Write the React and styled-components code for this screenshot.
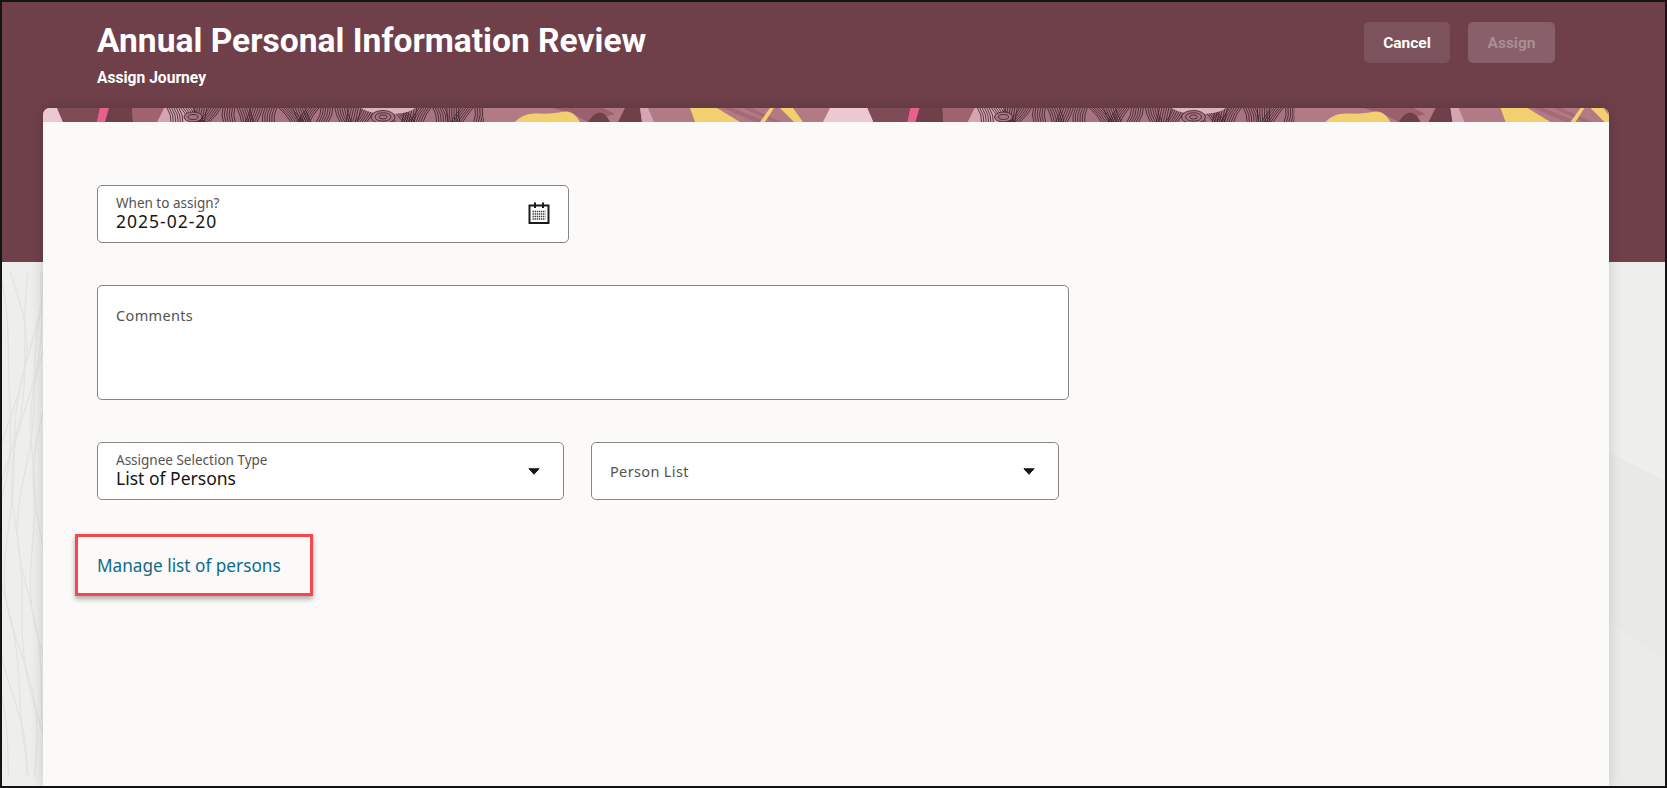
import React from "react";
import styled, { createGlobalStyle } from "styled-components";

const GlobalStyle = createGlobalStyle`
  html, body, #root {
    margin: 0;
    height: 100%;
  }
  body {
    font-family: "Noto Sans", "Open Sans", Arial, sans-serif;
    background: #111;
  }
`;

const Page = styled.div`
  position: relative;
  box-sizing: border-box;
  height: 788px;
  border: 2px solid #141414;
  overflow: hidden;
  background: #eeeeec;
  display: flex;
  flex-direction: column;
`;

const Backdrop = styled.svg`
  position: absolute;
  left: 0;
  top: 260px;
  width: 1663px;
  height: 524px;
`;

const Header = styled.header`
  position: relative;
  box-sizing: border-box;
  height: 260px;
  flex: none;
  background: #6f404a;
  padding: 20px 110px 0 95px;
  display: flex;
  justify-content: space-between;
  align-items: flex-start;
`;

const HeaderText = styled.div`
  margin-top: -1px;
`;

const Title = styled.h1`
  margin: 0;
  color: #fff;
  font-family: Roboto, "Noto Sans", sans-serif;
  font-size: 33.6px;
  line-height: 40px;
  font-weight: 700;
`;

const SubTitle = styled.div`
  margin-top: 7px;
  color: #fff;
  font-family: Roboto, "Noto Sans", sans-serif;
  font-size: 15.6px;
  line-height: 20px;
  font-weight: 700;
`;

const Actions = styled.div`
  display: flex;
  gap: 18px;
`;

const ActionButton = styled.button`
  width: ${(p) => p.$width}px;
  height: 41px;
  border: 0;
  border-radius: 5px;
  padding: 0;
  font: 700 15.5px Roboto, "Noto Sans", sans-serif;
  background: ${(p) => (p.disabled ? "#87606a" : "#7c535c")};
  color: ${(p) => (p.disabled ? "#ab8d94" : "#fff")};
`;

const Card = styled.main`
  position: relative;
  flex: 1;
  margin: -154px 56px 0 41px;
  background: #fbfaf8;
  border-radius: 7px 7px 0 0;
  box-shadow: 0 0 14px rgba(0, 0, 0, 0.16);
  overflow: hidden;
`;

const Banner = styled.svg`
  display: block;
  width: 100%;
  height: 14px;
`;

const CardBody = styled.div`
  padding: 63px 54px 0;
  display: flex;
  flex-direction: column;
  align-items: flex-start;
`;

const Field = styled.div`
  box-sizing: border-box;
  width: ${(p) => p.$width}px;
  height: ${(p) => p.$height || 58}px;
  background: #fff;
  border: 1px solid #858583;
  border-radius: 5px;
  padding: 0 18px;
  display: flex;
  align-items: center;
  justify-content: space-between;
  margin-top: ${(p) => p.$top || 0}px;
  color: #161513;
`;

const TextArea = styled(Field)`
  align-items: flex-start;
  padding-top: 19px;
`;

const Stacked = styled.div`
  display: flex;
  flex-direction: column;
  margin-top: -2px;
`;

const Label = styled.span`
  font-size: 13.5px;
  line-height: 16px;
  color: #55524f;
`;

const Placeholder = styled.span`
  font-size: 14.5px;
  line-height: 20px;
  color: #55524f;
  letter-spacing: 0.35px;
`;

const Value = styled.span`
  font-size: 17.5px;
  line-height: 20px;
  color: #161513;
  letter-spacing: ${(p) => (p.$digits ? "1px" : "0")};
`;

const SelectRow = styled.div`
  display: flex;
  gap: 27px;
  margin-top: 42px;
`;

const Caret = styled.svg`
  width: 12px;
  height: 7px;
  margin: 0 5px 0 0;
  flex: none;
`;

const CalendarIcon = styled.svg`
  width: 22px;
  height: 22px;
  margin-bottom: 2px;
  flex: none;
`;

const Callout = styled.div`
  box-sizing: border-box;
  width: 238px;
  height: 62px;
  margin: 34px 0 0 -22px;
  padding: 1px 0 0 19px;
  border: 3px solid #f5474e;
  box-shadow: 0 3px 5px rgba(0, 0, 0, 0.32);
  display: flex;
  align-items: center;
`;

const ManageLink = styled.a`
  color: #0f6a8b;
  font-size: 17.2px;
  text-decoration: none;
`;

// fingerprint strip: short patches of parallel ridges, each at its own slant
const fingerprintLines = () => {
  const lines = [];
  const patch = 14;
  for (let p = 0; p < 23; p++) {
    const start = 124 + p * patch;
    const lean = 9 * Math.sin(p * 1.7) + 4 * Math.cos(p * 0.8);
    const bow = 2.5 * Math.cos(p * 2.3);
    for (let i = 0; i < 6; i++) {
      const x = start + i * 2.35;
      lines.push(
        `M${x.toFixed(1)} 0Q${(x + lean / 2 + bow).toFixed(1)} 7 ${(x + lean).toFixed(1)} 14`
      );
    }
  }
  return lines.join("");
};

const BannerTile = () => (
  <>
    <rect width="810" height="14" fill="#b27a85" />
    <path d="M121 0H441V14H114Z" fill="#a87480" />
    <path d="M121 0H150L146 14H114Z" fill="#d5a5b1" />
    <path d={fingerprintLines()} fill="none" stroke="#3a1f26" strokeWidth="0.8" />
    <path d="M441 0H500V14H441Z" fill="#b27a85" />
    <path d="M-1 0H14L20 14H-1Z" fill="#ecc9d1" />
    <path d="M14 0H57L54 14H20Z" fill="#7e4b57" />
    <path d="M57 0H66L62 14H54Z" fill="#e9608a" />
    <path d="M66 0H89L90 14H62Z" fill="#6f404a" />
    <path d="M89 0H121L114 14H90Z" fill="#a0626f" />
    <path d="M318 0H372C368 5 350 7 338 6C330 5 322 3 318 0Z" fill="#d9b3bd" />
    <ellipse cx="150" cy="9" rx="9" ry="5" fill="#a87480" stroke="#3a1f26" strokeWidth="0.8" />
    <ellipse cx="150" cy="9" rx="5" ry="2.5" fill="none" stroke="#3a1f26" strokeWidth="0.8" />
    <ellipse cx="340" cy="9" rx="12" ry="6.5" fill="#a87480" stroke="#3a1f26" strokeWidth="0.8" />
    <ellipse cx="340" cy="9" rx="8" ry="4.2" fill="none" stroke="#3a1f26" strokeWidth="0.8" />
    <ellipse cx="340" cy="9" rx="4" ry="2" fill="none" stroke="#3a1f26" strokeWidth="0.8" />
    <path d="M510 0H560L572 6L545 14L530 6Q520 3 510 0Z" fill="#9b606d" />
    <path d="M472 14C478 8 484 5 495 5.5C505 6 515 5 522 3.5C530 3 534 9 537 14Z" fill="#f2cf6f" />
    <path d="M545 14C549 8 553 4.5 557 4.5C562 5 565 10 567 14Z" fill="#6f404a" />
    <path d="M582 0H597L599 14H575Z" fill="#6f404a" />
    <path d="M597 0H605L611 14H599Z" fill="#d5a5b4" />
    <path d="M647 0H674L697 14H652Z" fill="#f2cf6f" />
    <path d="M680 0H690L725 14H712Z" fill="#a46a76" />
    <path d="M700 0H708L738 14H730Z" fill="#a46a76" />
    <path d="M727 0H731L722 14H717Z" fill="#f2cf6f" />
    <path d="M737 0H750L760 14H751Z" fill="#f2cf6f" />
    <path d="M787 0H811V14H780Z" fill="#ecc9d1" />
  </>
);

// wood grain down the strip left of the card
const grainLine = (offset, stretch) => {
  const points = [];
  for (let y = 10; y <= 524; y += 14) {
    const x =
      offset +
      16 * Math.sin((y + offset * 6) / (62 * stretch)) +
      5 * Math.sin((y - offset * 9) / 33);
    points.push(`${x.toFixed(1)} ${y}`);
  }
  return `M${points.join("L")}`;
};

const ContourLines = () => (
  <g fill="none" stroke="#e3e3e1" strokeWidth="1.3" strokeLinejoin="round">
    {[-4, 4, 12, 20, 28, 36, 44, 52].map((offset) => (
      <path key={offset} d={grainLine(offset, 1 + Math.abs(offset) / 60)} />
    ))}
  </g>
);

const CalendarGlyph = () => (
  <CalendarIcon viewBox="0 0 22 22">
    <path d="M1.5 3.5H20.5V21H1.5Z" fill="#fff" stroke="#1a1a1a" strokeWidth="2" />
    <path d="M7 0.5V6M15 0.5V6" stroke="#1a1a1a" strokeWidth="2" />
    <path
      d="M4.5 9.5H17.5M4.5 12H17.5M4.5 14.5H17.5M4.5 17H17.5"
      stroke="#3c3c3c"
      strokeWidth="1.7"
      strokeDasharray="1.4 0.7"
    />
  </CalendarIcon>
);

const CaretGlyph = () => (
  <Caret viewBox="0 0 13 7">
    <path d="M1 0.5H12L6.5 6.5Z" fill="#161513" stroke="#161513" strokeLinejoin="round" />
  </Caret>
);

export default function App() {
  return (
    <>
      <GlobalStyle />
      <Page>
        <Backdrop viewBox="0 0 1663 524">
          <path d="M1607 191L1663 219V524H1607Z" fill="#e9e9e7" />
          <path d="M1607 359L1663 398V524H1607Z" fill="#ebebe9" />
          <ContourLines />
        </Backdrop>
        <Header>
          <HeaderText>
            <Title>Annual Personal Information Review</Title>
            <SubTitle>Assign Journey</SubTitle>
          </HeaderText>
          <Actions>
            <ActionButton $width={86}>Cancel</ActionButton>
            <ActionButton $width={87} disabled>
              Assign
            </ActionButton>
          </Actions>
        </Header>
        <Card>
          <Banner viewBox="0 0 1566 14" preserveAspectRatio="none">
            <BannerTile />
            <g transform="translate(810.5 0)">
              <BannerTile />
            </g>
          </Banner>
          <CardBody>
            <Field $width={472}>
              <Stacked>
                <Label>When to assign?</Label>
                <Value $digits>2025-02-20</Value>
              </Stacked>
              <CalendarGlyph />
            </Field>
            <TextArea $width={972} $height={115} $top={42}>
              <Placeholder>Comments</Placeholder>
            </TextArea>
            <SelectRow>
              <Field $width={467}>
                <Stacked>
                  <Label>Assignee Selection Type</Label>
                  <Value>List of Persons</Value>
                </Stacked>
                <CaretGlyph />
              </Field>
              <Field $width={468}>
                <Placeholder>Person List</Placeholder>
                <CaretGlyph />
              </Field>
            </SelectRow>
            <Callout>
              <ManageLink href="#">Manage list of persons</ManageLink>
            </Callout>
          </CardBody>
        </Card>
      </Page>
    </>
  );
}
